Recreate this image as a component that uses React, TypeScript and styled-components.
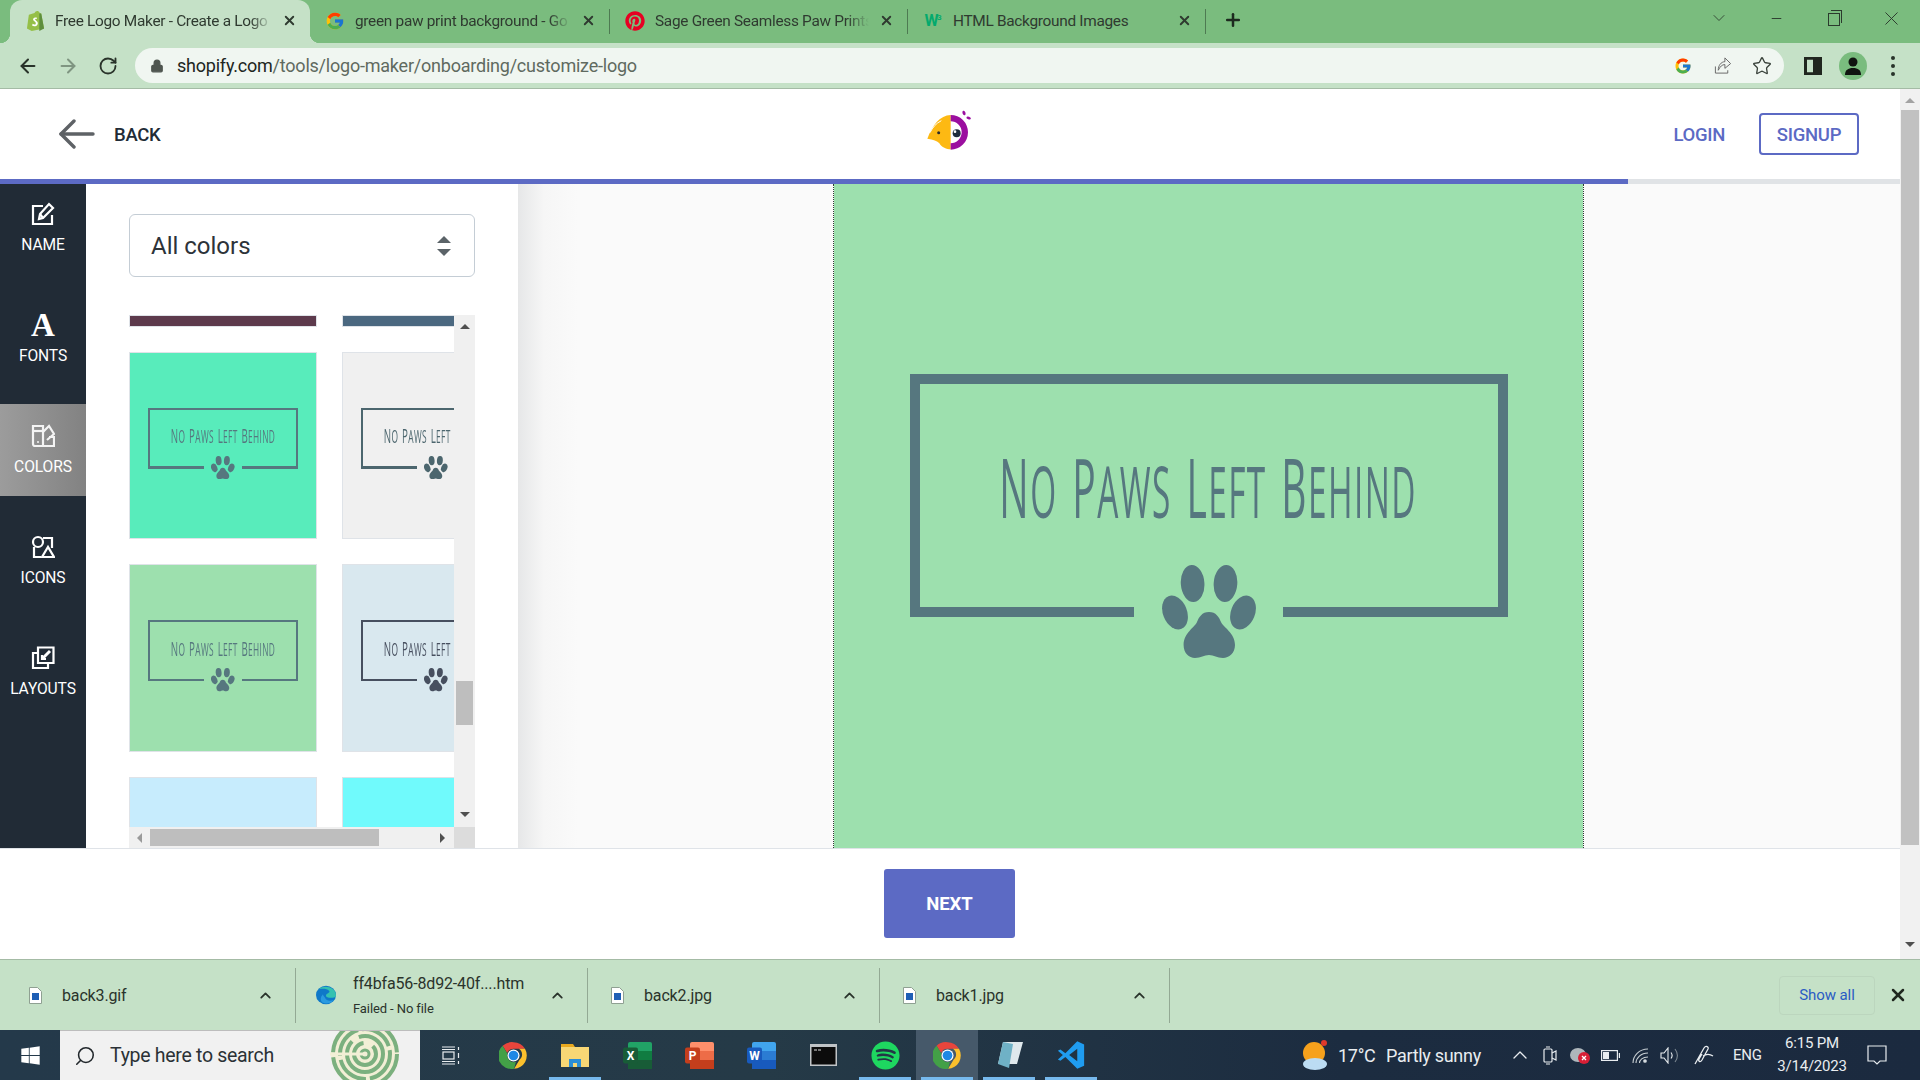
import React from "react";
import styled, { createGlobalStyle } from "styled-components";
import { ArrowLeft, ArrowRight, RotateCw, Lock, Star, X, Plus, ChevronDown, ChevronUp, Minus, Search } from "lucide-react";
import { FcGoogle } from "react-icons/fc";
import { FaPinterest, FaSpotify, FaWindows } from "react-icons/fa";

const Global = createGlobalStyle`
  html, body { margin: 0; padding: 0; background: #fff; overflow: hidden; }
  * { box-sizing: border-box; }
  #root { font-family: Roboto, "Liberation Sans", sans-serif; }
`;
const Screen = styled.div`
  width: 1920px; height: 1080px; display: flex; flex-direction: column; overflow: hidden;
`;

/* Browser chrome */
const TabStrip = styled.div`
  height: 43px; background: #7abc7e; display: flex; align-items: stretch; padding-left: 10px; flex: none;
`;
const Tab = styled.div<{ $w: number; $active?: boolean }>`
  position: relative; width: ${p => p.$w}px; display: flex; align-items: center; padding: 0 13px 2px 15px; gap: 10px; color: #2f3a30;
  background: ${p => (p.$active ? "#c5e1c7" : "transparent")};
  border-radius: 12px 12px 0 0;
  ${p => p.$active && `
    &::before, &::after { content: ""; position: absolute; bottom: 0; width: 10px; height: 10px; }
    &::before { left: -10px; background: radial-gradient(circle at 0 0, #7abc7e 10px, #c5e1c7 10.5px); }
    &::after { right: -10px; background: radial-gradient(circle at 100% 0, #7abc7e 10px, #c5e1c7 10.5px); }
  `}
`;
const TabIcon = styled.span`
  width: 20px; height: 24px; flex: none; display: flex; align-items: center; justify-content: center;
`;
const TabTitle = styled.span`
  flex: 1; font-size: 15.4px; white-space: nowrap; overflow: hidden; letter-spacing: -0.3px;
  mask-image: linear-gradient(to right, #000 90%, transparent 100%);
`;
const PlainTitle = styled(TabTitle)`
  mask-image: none;
`;
const W3Mark = styled.span`
  font: 700 16px Roboto, sans-serif; color: #04aa6d; letter-spacing: -1.5px; white-space: nowrap; line-height: 16px;
  sup { font-size: 8px; line-height: 8px; letter-spacing: 0; }
`;
const TabDivider = styled.div`
  width: 1px; height: 25px; background: #4e7a52; align-self: center; flex: none; margin-bottom: 1px;
`;
const NewTab = styled.div`
  width: 54px; display: flex; align-items: center; justify-content: center; color: #1d2a1f; padding-bottom: 3px;
`;
const WindowControls = styled.div`
  margin-left: auto; display: flex; height: 36px;
`;
const WindowButton = styled.div`
  width: 57.5px; display: flex; align-items: center; justify-content: center; color: #2b3a2d;
`;
const RestoreIcon = styled.span`
  width: 12px; height: 13px; border: 1.4px solid #2b3a2d; position: relative; display: block; margin-top: 2px;
  &::after { content: ""; position: absolute; left: 2px; top: -4px; width: 10px; height: 12px; border: 1.4px solid #2b3a2d; border-left: 0; border-bottom: 0; }
`;
const Toolbar = styled.div`
  height: 46px; background: #c5e1c7; border-bottom: 1px solid #a4bba5; display: flex; align-items: flex-start; padding: 5px 7px 0 8px; flex: none;
`;
const NavButton = styled.div<{ $dim?: boolean }>`
  width: 40px; height: 35px; display: flex; align-items: center; justify-content: center;
  color: ${p => (p.$dim ? "#7f9581" : "#29332a")};
`;
const Omnibox = styled.div`
  flex: 1; height: 35px; background: #f0f6f1; border-radius: 18px; margin: 0 9px 0 7px; display: flex; align-items: center; padding: 0 2px 0 15px;
`;
const Url = styled.span`
  margin-left: 13px; font-size: 18px; letter-spacing: -0.22px; color: #5f6a60; white-space: nowrap;
  b { font-weight: 400; color: #202521; }
`;
const OmniIcons = styled.div`
  margin-left: auto; display: flex;
`;
const OmniButton = styled.div`
  width: 39.5px; height: 35px; display: flex; align-items: center; justify-content: center; color: #3a423b;
`;
const Avatar = styled.span`
  width: 28px; height: 28px; border-radius: 50%; background: #7abc7e; display: flex; align-items: center; justify-content: center;
`;
const Dots = styled.span`
  display: flex; flex-direction: column; gap: 4px;
  i { width: 4px; height: 4px; border-radius: 50%; background: #29332a; display: block; }
`;

/* Page */
const Body = styled.div`
  height: 870px; display: flex; flex: none;
`;
const Page = styled.div`
  flex: 1; display: flex; flex-direction: column; min-width: 0;
`;
const PageScrollbar = styled.div`
  width: 20px; background: #f1f1f1; display: flex; flex-direction: column; align-items: center; padding-top: 9px;
`;
const PageThumb = styled.div`
  width: 18px; height: 735px; background: #c1c1c1; margin-top: 7px; flex: none;
`;
const Arrow = styled.span<{ $dir: "up" | "down" | "left" | "right"; $c?: string }>`
  width: 0; height: 0; display: block; flex: none;
  ${p => {
    const c = p.$c || "#505050";
    if (p.$dir === "up") return `border-left:5px solid transparent;border-right:5px solid transparent;border-bottom:5px solid ${c};`;
    if (p.$dir === "down") return `border-left:5px solid transparent;border-right:5px solid transparent;border-top:5px solid ${c};`;
    if (p.$dir === "left") return `border-top:5px solid transparent;border-bottom:5px solid transparent;border-right:5px solid ${c};`;
    return `border-top:5px solid transparent;border-bottom:5px solid transparent;border-left:5px solid ${c};`;
  }}
`;
const PageArrowDown = styled.div`
  margin-top: 97px;
`;
const Header = styled.header`
  height: 90px; display: grid; grid-template-columns: 1fr auto 1fr; align-items: center; flex: none;
`;
const BackLink = styled.div`
  display: flex; align-items: center; gap: 19px; color: #5e6266; padding-left: 58px;
`;
const BackText = styled.span`
  font-size: 18.5px; font-weight: 500; color: #212b36; letter-spacing: -0.3px; padding-top: 2px;
`;
const HeaderActions = styled.div`
  display: flex; justify-content: flex-end; align-items: center; gap: 34px; padding-right: 41px;
`;
const Login = styled.span`
  font-size: 18.5px; font-weight: 500; color: #5c6ac4; letter-spacing: -0.3px; padding-top: 2px;
`;
const Signup = styled.button`
  width: 100px; height: 42px; border: 2px solid #5c6ac4; border-radius: 4px; background: #fff;
  font: 500 18.5px Roboto, sans-serif; letter-spacing: -0.3px; color: #5c6ac4; padding: 2px 0 0;
`;
const BrandMark = styled.svg`
  margin-bottom: 8px; display: block;
`;
const ProgressTrack = styled.div`
  height: 5px; background: #e0e3e6; flex: none;
`;
const ProgressFill = styled.div`
  width: 1628px; height: 100%; background: #5c6ac4;
`;
const Workspace = styled.div`
  height: 664px; display: flex; flex: none;
`;
const Sidebar = styled.nav`
  width: 86px; background: #212b36; flex: none;
`;
const SideList = styled.div`
  display: flex; flex-direction: column; gap: 19px; margin-top: -2px;
`;
const SideItem = styled.div<{ $active?: boolean }>`
  height: 92px; display: flex; flex-direction: column; align-items: center; padding-top: 20px; color: #fff;
  ${p => p.$active && `background: linear-gradient(90deg, #9c9c9c, #828282);`}
`;
const SideGlyph = styled.div`
  height: 24px; display: flex; align-items: center; justify-content: center;
`;
const FontGlyph = styled.span`
  font: 700 33px "Liberation Serif", serif; line-height: 24px;
`;
const SideLabel = styled.span`
  font-size: 15.6px; margin-top: 10px; line-height: 18px; letter-spacing: -0.1px;
`;
const Panel = styled.aside`
  width: 432px; flex: none; background: #fff; padding: 30px 43px 0; display: flex; flex-direction: column;
`;
const SelectBox = styled.div`
  height: 63px; border: 1.5px solid #c4cdd5; border-radius: 6px; display: flex; align-items: center; justify-content: space-between; padding: 0 23px 0 21px;
  font-size: 24px; color: #2d3339; flex: none; margin-bottom: 38px;
`;
const Stepper = styled.span`
  display: flex; flex-direction: column; gap: 6px;
`;
const StepUp = styled.i`
  width: 0; height: 0; display: block; border-left: 7px solid transparent; border-right: 7px solid transparent; border-bottom: 7px solid #5b6368;
`;
const StepDown = styled.i`
  width: 0; height: 0; display: block; border-left: 7px solid transparent; border-right: 7px solid transparent; border-top: 7px solid #5b6368;
`;
const ScrollFrame = styled.div`
  flex: 1; display: grid; grid-template-columns: 325px 21px; grid-template-rows: 512px 21px;
`;
const Viewport = styled.div`
  overflow: hidden;
`;
const CardGrid = styled.div`
  display: grid; grid-template-columns: 188px 188px; grid-template-rows: 12px 187px 188px 188px; gap: 25px;
`;
const Card = styled.div<{ $bg: string }>`
  background: ${p => p.$bg}; border: 1px solid #dfe3e8; overflow: hidden; display: flex; align-items: center; justify-content: center; padding-bottom: 4px;
`;
const VTrack = styled.div`
  background: #f0f0f0; display: flex; flex-direction: column; align-items: center; padding-top: 9px;
`;
const VThumb = styled.div`
  width: 17px; height: 44px; background: #bebebe; margin-top: 352px; flex: none;
`;
const VDown = styled.div`
  margin-top: 87px;
`;
const HTrack = styled.div`
  background: #f0f0f0; display: flex; align-items: center; padding-left: 8px;
`;
const HThumb = styled.div`
  width: 229px; height: 17px; background: #bebebe; margin-left: 8px; flex: none;
`;
const HRight = styled.div`
  margin-left: 61px;
`;
const Corner = styled.div`
  background: #dcdcdc;
`;
const Canvas = styled.main`
  flex: 1; display: flex; justify-content: center; padding-right: 1px; background: linear-gradient(90deg, #e6e7e8 0, #f6f6f6 26px, #fafafa 60px);
`;
const Preview = styled.div`
  width: 751px; background: #9de0ae; background-clip: padding-box; border-left: 1px dotted #2e3a33; border-right: 1px dotted #2e3a33; display: flex; align-items: center; justify-content: center;
`;
const Footer = styled.footer`
  height: 111px; border-top: 1px solid #dfe3e8; display: flex; justify-content: center; padding: 20px 1px 0 0; flex: none; background: #fff;
`;
const NextButton = styled.button`
  width: 131px; height: 69px; background: #5c6ac4; color: #fff; border: 0; border-radius: 3px; font: 700 18.5px Roboto, sans-serif; padding: 0;
`;

/* Logo artwork */
const LogoRoot = styled.div<{ $s: number; $c: string }>`
  width: ${p => 598 * p.$s}px; padding-bottom: ${p => 42 * p.$s}px; color: ${p => p.$c}; flex: none; display: flex; flex-direction: column;
`;
const LogoFrame = styled.div<{ $s: number }>`
  height: ${p => 233 * p.$s}px; border: ${p => Math.max(10 * p.$s, 1.6)}px solid currentColor; border-bottom: 0;
  display: flex; align-items: flex-start; justify-content: center; padding-top: ${p => 62 * p.$s}px; overflow: hidden;
`;
const LogoText = styled.span<{ $s: number }>`
  font-family: "Open Sans", Lato, sans-serif; font-weight: 500; text-transform: uppercase; white-space: nowrap;
  font-size: ${p => 71 * p.$s}px; line-height: ${p => 80 * p.$s}px; letter-spacing: ${p => 3 * p.$s}px; word-spacing: ${p => 10 * p.$s}px;
  transform: scaleX(0.47); flex: none;
`;
const LogoWord = styled.span<{ $s: number }>`
  display: inline-block;
  &::first-letter { font-size: ${p => 83 * p.$s}px; }
`;
const LogoBase = styled.div<{ $s: number }>`
  height: ${p => Math.max(10 * p.$s, 2)}px; display: flex; align-items: center;
`;
const LogoLine = styled.div`
  flex: 1; height: 100%; background: currentColor;
`;
const PawSlot = styled.div<{ $s: number }>`
  width: ${p => 149 * p.$s}px; display: flex; justify-content: center; align-items: center; height: 100%;
  svg { width: ${p => 94 * p.$s}px; height: ${p => 93 * p.$s}px; flex: none; }
`;

/* Download shelf */
const Shelf = styled.div`
  height: 71px; background: #c5e1c7; border-top: 1px solid #a4bba5; display: flex; align-items: center; flex: none; color: #2a332b;
`;
const DownloadItem = styled.div<{ $w: number; $pad: number; $gap: number }>`
  width: ${p => p.$w}px; height: 55px; border-right: 1px solid #93a994; display: flex; align-items: center; flex: none;
  padding: 0 21px 0 ${p => p.$pad}px; gap: ${p => p.$gap}px;
`;
const FileName = styled.span`
  font-size: 16px; letter-spacing: -0.15px;
`;
const FileStack = styled.div`
  display: flex; flex-direction: column; gap: 8px;
`;
const FileStatus = styled.span`
  font-size: 13px; letter-spacing: -0.1px;
`;
const Caret = styled.span`
  margin-left: auto; display: flex;
`;
const ShowAll = styled.div`
  margin-left: auto; width: 96px; height: 39px; border: 1px solid #bcd6be; border-radius: 4px; display: flex; align-items: center; justify-content: center;
  color: #2a5cc4; font-size: 15px; letter-spacing: -0.1px;
`;
const ShelfClose = styled.div`
  width: 45px; display: flex; justify-content: center; color: #20281f;
`;

/* Taskbar */
const Taskbar = styled.div`
  height: 50px; background: linear-gradient(90deg, #24394a 0, #253a47 40%, #1c2c40 70%, #1b2a3f 100%); display: flex; align-items: stretch; flex: none; color: #eef2f4;
`;
const StartButton = styled.div`
  width: 60px; display: flex; align-items: center; justify-content: center; color: #fff;
`;
const SearchBox = styled.div`
  width: 360px; background: #f1f1f1; border-top: 1px solid #bdbdbd; display: flex; align-items: center; padding: 0 20px 0 14px; gap: 14px; color: #22282c; overflow: hidden;
`;
const SearchText = styled.span`
  font-size: 19.5px; letter-spacing: -0.3px; white-space: nowrap; color: #2b3136;
`;
const Maze = styled.svg`
  margin-left: auto; flex: none;
`;
const TaskIcons = styled.div`
  display: flex;
`;
const TaskSlot = styled.div<{ $on?: boolean; $run?: boolean }>`
  width: 62px; position: relative; display: flex; align-items: center; justify-content: center;
  background: ${p => (p.$on ? "#46596a" : "transparent")};
  ${p => p.$run && `&::after { content: ""; position: absolute; left: 5px; right: 5px; bottom: 0; height: 3px; background: #76b9ed; }`}
`;
const Tray = styled.div`
  margin-left: auto; display: flex; align-items: center; padding-right: 18px; font-size: 18px; color: #e9edf0;
`;
const TraySlot = styled.div<{ $w: number }>`
  width: ${p => p.$w}px; display: flex; align-items: center; justify-content: center; flex: none;
`;
const TrayText = styled.span<{ $w: number; $pad?: number }>`
  width: ${p => p.$w}px; padding-left: ${p => p.$pad || 0}px; flex: none; white-space: nowrap; letter-spacing: -0.3px;
`;
const TrayEng = styled(TrayText)`
  font-size: 15px;
`;
const Clock = styled.div`
  width: 80px; flex: none; display: flex; flex-direction: column; align-items: center; gap: 4px; font-size: 15px; line-height: 19px; letter-spacing: -0.2px;
`;

const Paw = () => (
  <svg viewBox="0 0 94 93" fill="currentColor">
    <ellipse cx="30.6" cy="18.5" rx="11.8" ry="18.5" transform="rotate(-4 30.6 18.5)" />
    <ellipse cx="63.5" cy="18.5" rx="11.8" ry="18.5" transform="rotate(4 63.5 18.5)" />
    <ellipse cx="13" cy="47.5" rx="12" ry="17.5" transform="rotate(-22 13 47.5)" />
    <ellipse cx="81" cy="47.5" rx="12" ry="17.5" transform="rotate(22 81 47.5)" />
    <path d="M47 47C54 47 57 52 59 57C61 62 73 68 73 80C73 88 67 93 61 93C55 93 52 90 47 90C42 90 39 93 33 93C27 93 21.6 88 21.6 80C21.6 68 33 62 35 57C37 52 40 47 47 47Z" />
  </svg>
);

const Logo = ({ s, color }: { s: number; color: string }) => (
  <LogoRoot $s={s} $c={color}>
    <LogoFrame $s={s}>
      <LogoText $s={s}>
        <LogoWord $s={s}>No</LogoWord>{" "}
        <LogoWord $s={s}>Paws</LogoWord>{" "}
        <LogoWord $s={s}>Left</LogoWord>{" "}
        <LogoWord $s={s}>Behind</LogoWord>
      </LogoText>
    </LogoFrame>
    <LogoBase $s={s}>
      <LogoLine />
      <PawSlot $s={s}><Paw /></PawSlot>
      <LogoLine />
    </LogoBase>
  </LogoRoot>
);

const ChromeIcon = ({ size = 29 }: { size?: number }) => (
  <svg width={size} height={size} viewBox="0 0 48 48">
    <path d="M24 2a22 22 0 0 1 19 11H24a11 11 0 0 0-10.500 7L6 8A22 22 0 0 1 24 2Z" fill="#e8453c" />
    <path d="M43 13a22 22 0 0 1-18 33l9-15a11 11 0 0 0-1-18Z" fill="#fbc02d" />
    <path d="M25 46A22 22 0 0 1 6 8l8 13a11 11 0 0 0 14 13.500Z" fill="#43a047" />
    <circle cx="24" cy="24" r="10" fill="#fff" />
    <circle cx="24" cy="24" r="8" fill="#1e88e5" />
  </svg>
);
const Shopify = () => (
  <svg width="19" height="21" viewBox="0 0 20 24" preserveAspectRatio="none">
    <path d="M3 5.500 9 3.500C10 1 13 0 14.500 3.500L16 4l3 17-13 3L1 21Z" fill="#95bf47" />
    <path d="M16 4l3 17-5 3 0-20Z" fill="#5e8e3e" />
    <path d="M11.500 8.800c-3-1-4.800 1-3.800 3 .8 1.500 3 2 2.600 3.800-.3 1.300-2 1.200-3.300.2l-.6 2c1.800 1.200 5.400 1 6-2.200.5-3-3-3.500-2.800-5 .1-.9 1.200-.8 2-.4Z" fill="#fff" />
  </svg>
);
const FileIcon = () => (
  <svg width="13" height="17" viewBox="0 0 13 17">
    <path d="M.5.5h8l4 4v12h-12Z" fill="#fff" stroke="#8fa092" />
    <rect x="3" y="6" width="7" height="7" fill="#1f5fb5" />
  </svg>
);
const EdgeIcon = () => (
  <svg width="20" height="20" viewBox="0 0 20 28" preserveAspectRatio="none">
    <ellipse cx="10" cy="14" rx="10" ry="13" fill="#0f78c8" />
    <path d="M3 6C8-1 20 3 20 15c0 2-2 3-5 3-3 0-5-1-5-3 0-4 5-4 3-7-2-3-7-3-10-2Z" fill="#35c1b0" />
    <path d="M9 18c1 4 5 5 9 3-3 5-8 6-11 4-3-2-3-8 0-12 0 2 1 3 2 5Z" fill="#2a9ae0" />
  </svg>
);
const OfficeIcon = ({ a, b, c, letter }: { a: string; b: string; c: string; letter: string }) => (
  <svg width="29" height="27" viewBox="0 0 29 27">
    <rect x="5" y="0" width="24" height="27" rx="2" fill={a} />
    <rect x="5" y="9" width="24" height="9" fill={b} />
    <rect x="5" y="18" width="24" height="9" fill={c} />
    <rect x="0" y="5.500" width="15" height="16" rx="2" fill={c} />
    <text x="7.500" y="18" textAnchor="middle" fontFamily="Roboto, sans-serif" fontWeight="700" fontSize="12" fill="#fff">{letter}</text>
  </svg>
);
const SideIconName = () => (
  <svg width="24" height="24" viewBox="0 0 24 24" fill="none" stroke="#fff" strokeWidth="2.200">
    <path d="M21 13v9H2V4h10" />
    <path d="M8 17l1-5L18 2l4 4-10 10Z" />
    <path d="M9 12l3 4" />
  </svg>
);
const SideIconColors = () => (
  <svg width="24" height="24" viewBox="0 0 24 24" fill="none" stroke="#f4f4f4" strokeWidth="2.200">
    <path d="M2 2h10v20H4a2 2 0 0 1-2-2Z" />
    <path d="M2 7h10" />
    <path d="M12 8l6-6 5 8-7 6" />
    <path d="M12 22h11v-9h-5" />
    <circle cx="7" cy="18" r="1" fill="#f4f4f4" stroke="none" />
  </svg>
);
const SideIconShapes = () => (
  <svg width="24" height="24" viewBox="0 0 24 24" fill="none" stroke="#fff" strokeWidth="2.200">
    <circle cx="7" cy="7" r="5" />
    <path d="M12 3h9v10" />
    <path d="M3 12v10h7" />
    <path d="M11 22l6-10 6 10Z" />
  </svg>
);
const SideIconLayouts = () => (
  <svg width="24" height="24" viewBox="0 0 24 24" fill="none" stroke="#fff" strokeWidth="2.200">
    <path d="M7 7H2v15h15v-5" />
    <path d="M7 1.500h15.500V17H7Z" />
    <path d="M11 13l8-8" strokeWidth="3" />
    <path d="M11 9v4h4" />
  </svg>
);
const BirdLogo = () => (
  <BrandMark width="100" height="80" viewBox="0 0 300 240">
    <path d="M152 75C120 76 98 105 82 146C100 149 112 152 118 160C125 172 140 178 152 178Z" fill="#fdb913" />
    <path d="M90 128C98 112 108 100 124 92" stroke="#fff" strokeWidth="3" fill="none" />
    <circle cx="116" cy="128" r="4.500" fill="#2b2b2b" />
    <path d="M152 75A52 52 0 0 1 152 179L152 160A33 33 0 0 0 152 94Z" fill="#9b0f9f" />
    <circle cx="170" cy="130" r="12" fill="#1f2d3d" />
    <circle cx="165" cy="125" r="4" fill="#fff" />
    <ellipse cx="192" cy="69" rx="4.500" ry="7" transform="rotate(-20 192 69)" fill="#9b0f9f" />
    <ellipse cx="206" cy="84" rx="7" ry="4" transform="rotate(20 206 84)" fill="#9b0f9f" />
  </BrandMark>
);

const cards: { bg: string; logo?: string }[] = [
  { bg: "#5d3a4c" }, { bg: "#4b6880" },
  { bg: "#58ecbb", logo: "#56777f" }, { bg: "#f0f0f0", logo: "#4c666e" },
  { bg: "#9de0ae", logo: "#56777f" }, { bg: "#d9e8ef", logo: "#474f5f" },
  { bg: "#c7ecfd" }, { bg: "#70fafc" },
];

export default function App() {
  return (
    <Screen>
      <Global />
      <TabStrip>
        <Tab $w={300} $active>
          <TabIcon><Shopify /></TabIcon>
          <TabTitle>Free Logo Maker - Create a Logo</TabTitle>
          <X size={15} strokeWidth={3} />
        </Tab>
        <Tab $w={299}>
          <TabIcon><FcGoogle size={20} /></TabIcon>
          <TabTitle>green paw print background - Go</TabTitle>
          <X size={15} strokeWidth={3} />
        </Tab>
        <TabDivider />
        <Tab $w={297}>
          <TabIcon><FaPinterest size={20} color="#e60023" /></TabIcon>
          <TabTitle>Sage Green Seamless Paw Prints</TabTitle>
          <X size={15} strokeWidth={3} />
        </Tab>
        <TabDivider />
        <Tab $w={297}>
          <TabIcon><W3Mark>W<sup>3</sup></W3Mark></TabIcon>
          <PlainTitle>HTML Background Images</PlainTitle>
          <X size={15} strokeWidth={3} />
        </Tab>
        <TabDivider />
        <NewTab><Plus size={20} strokeWidth={3} /></NewTab>
        <WindowControls>
          <WindowButton><ChevronDown size={20} strokeWidth={1} /></WindowButton>
          <WindowButton><Minus size={15} strokeWidth={1.500} /></WindowButton>
          <WindowButton><RestoreIcon /></WindowButton>
          <WindowButton><X size={23} strokeWidth={1} /></WindowButton>
        </WindowControls>
      </TabStrip>
      <Toolbar>
        <NavButton><ArrowLeft size={22} strokeWidth={2.200} /></NavButton>
        <NavButton $dim><ArrowRight size={22} strokeWidth={2.200} /></NavButton>
        <NavButton><RotateCw size={20} strokeWidth={2.200} /></NavButton>
        <Omnibox>
          <Lock size={14} fill="#4f5650" color="#4f5650" strokeWidth={2} />
          <Url><b>shopify.com</b>/tools/logo-maker/onboarding/customize-logo</Url>
          <OmniIcons>
            <OmniButton><FcGoogle size={18} /></OmniButton>
            <OmniButton>
              <svg width="20" height="19" viewBox="0 0 20 20" fill="none" stroke="#666" strokeWidth="1">
                <path d="M2 11v7h13v-3" />
                <path d="M5 15c0-5 3-9 7-9V2l6 6-6 5V9c-3 0-5 2-7 6Z" />
              </svg>
            </OmniButton>
            <OmniButton><Star size={20} strokeWidth={1.600} /></OmniButton>
          </OmniIcons>
        </Omnibox>
        <NavButton>
          <svg width="18" height="18" viewBox="0 0 18 20" preserveAspectRatio="none"><path d="M0 0h18v20H0Zm3 3v14h6V3Z" fill="#20261f" fillRule="evenodd" /></svg>
        </NavButton>
        <NavButton>
          <Avatar>
            <svg width="16" height="18" viewBox="0 0 16 18" fill="#101510"><circle cx="8" cy="5" r="4.500" /><path d="M0 18c0-5 3-7 8-7s8 2 8 7Z" /></svg>
          </Avatar>
        </NavButton>
        <NavButton><Dots><i /><i /><i /></Dots></NavButton>
      </Toolbar>
      <Body>
        <Page>
          <Header>
            <BackLink>
              <svg width="37" height="30" viewBox="0 0 37 30" fill="none" stroke="#5e6266" strokeWidth="3.400" strokeLinecap="round" strokeLinejoin="round">
                <path d="M35 15H3" />
                <path d="M16 2L3 15l13 13" />
              </svg>
              <BackText>BACK</BackText>
            </BackLink>
            <BirdLogo />
            <HeaderActions>
              <Login>LOGIN</Login>
              <Signup>SIGNUP</Signup>
            </HeaderActions>
          </Header>
          <ProgressTrack><ProgressFill /></ProgressTrack>
          <Workspace>
            <Sidebar>
              <SideList>
                <SideItem><SideGlyph><SideIconName /></SideGlyph><SideLabel>NAME</SideLabel></SideItem>
                <SideItem><SideGlyph><FontGlyph>A</FontGlyph></SideGlyph><SideLabel>FONTS</SideLabel></SideItem>
                <SideItem $active><SideGlyph><SideIconColors /></SideGlyph><SideLabel>COLORS</SideLabel></SideItem>
                <SideItem><SideGlyph><SideIconShapes /></SideGlyph><SideLabel>ICONS</SideLabel></SideItem>
                <SideItem><SideGlyph><SideIconLayouts /></SideGlyph><SideLabel>LAYOUTS</SideLabel></SideItem>
              </SideList>
            </Sidebar>
            <Panel>
              <SelectBox>
                All colors
                <Stepper><StepUp /><StepDown /></Stepper>
              </SelectBox>
              <ScrollFrame>
                <Viewport>
                  <CardGrid>
                    {cards.map((c, i) => (
                      <Card key={i} $bg={c.bg}>
                        {c.logo && <Logo s={0.25} color={c.logo} />}
                      </Card>
                    ))}
                  </CardGrid>
                </Viewport>
                <VTrack>
                  <Arrow $dir="up" />
                  <VThumb />
                  <VDown><Arrow $dir="down" /></VDown>
                </VTrack>
                <HTrack>
                  <Arrow $dir="left" $c="#9a9a9a" />
                  <HThumb />
                  <HRight><Arrow $dir="right" /></HRight>
                </HTrack>
                <Corner />
              </ScrollFrame>
            </Panel>
            <Canvas>
              <Preview>
                <Logo s={1} color="#56777f" />
              </Preview>
            </Canvas>
          </Workspace>
          <Footer><NextButton>NEXT</NextButton></Footer>
        </Page>
        <PageScrollbar>
          <Arrow $dir="up" $c="#a3a3a3" />
          <PageThumb />
          <PageArrowDown><Arrow $dir="down" /></PageArrowDown>
        </PageScrollbar>
      </Body>
      <Shelf>
        <DownloadItem $w={296} $pad={29} $gap={20}>
          <FileIcon /><FileName>back3.gif</FileName>
          <Caret><ChevronUp size={17} strokeWidth={2.500} /></Caret>
        </DownloadItem>
        <DownloadItem $w={292} $pad={20} $gap={17}>
          <EdgeIcon />
          <FileStack>
            <FileName>ff4bfa56-8d92-40f....htm</FileName>
            <FileStatus>Failed - No file</FileStatus>
          </FileStack>
          <Caret><ChevronUp size={17} strokeWidth={2.500} /></Caret>
        </DownloadItem>
        <DownloadItem $w={292} $pad={23} $gap={20}>
          <FileIcon /><FileName>back2.jpg</FileName>
          <Caret><ChevronUp size={17} strokeWidth={2.500} /></Caret>
        </DownloadItem>
        <DownloadItem $w={290} $pad={23} $gap={20}>
          <FileIcon /><FileName>back1.jpg</FileName>
          <Caret><ChevronUp size={17} strokeWidth={2.500} /></Caret>
        </DownloadItem>
        <ShowAll>Show all</ShowAll>
        <ShelfClose><X size={20} strokeWidth={3} /></ShelfClose>
      </Shelf>
      <Taskbar>
        <StartButton><FaWindows size={21} /></StartButton>
        <SearchBox>
          <Search size={22} strokeWidth={1.700} transform="scale(-1,1)" />
          <SearchText>Type here to search</SearchText>
          <Maze width="70" height="50" viewBox="0 0 70 50" fill="none">
            <circle cx="35" cy="23" r="34" fill="#f2efd6" />
            <circle cx="35" cy="23" r="32" stroke="#7bb07f" strokeWidth="4" strokeDasharray="46 5" />
            <circle cx="35" cy="23" r="25" stroke="#7bb07f" strokeWidth="4" strokeDasharray="34 4" />
            <circle cx="35" cy="23" r="18" stroke="#7bb07f" strokeWidth="4" strokeDasharray="70 8" />
            <circle cx="35" cy="23" r="11" stroke="#7bb07f" strokeWidth="4" strokeDasharray="50 10" />
            <circle cx="35" cy="23" r="4" stroke="#7bb07f" strokeWidth="3" />
            <path d="M0 23h34" stroke="#f2efd6" strokeWidth="3" />
          </Maze>
        </SearchBox>
        <TaskIcons>
          <TaskSlot>
            <svg width="18" height="19" viewBox="0 0 18 19" fill="none" stroke="#e8ecef" strokeWidth="1.200">
              <path d="M0 1h13M0 3.500h13M0 15.500h13M0 18h13" />
              <rect x="1" y="6" width="11" height="7" />
              <path d="M16.500 1v3M16.500 7v5M16.500 15v3" />
            </svg>
          </TaskSlot>
          <TaskSlot><ChromeIcon /></TaskSlot>
          <TaskSlot $run>
            <svg width="28" height="23" viewBox="0 0 28 23">
              <path d="M0 0h12l2 3H0Z" fill="#e9a91f" />
              <rect x="0" y="3" width="28" height="20" fill="#f8d775" />
              <path d="M8 23v-8h12v8h-4v-4h-4v4Z" fill="#2c8ed6" />
            </svg>
          </TaskSlot>
          <TaskSlot><OfficeIcon a="#21a366" b="#107c41" c="#185c37" letter="X" /></TaskSlot>
          <TaskSlot><OfficeIcon a="#ff8f6b" b="#ed6c47" c="#c43e1c" letter="P" /></TaskSlot>
          <TaskSlot><OfficeIcon a="#41a5ee" b="#2b7cd3" c="#185abd" letter="W" /></TaskSlot>
          <TaskSlot>
            <svg width="27" height="22" viewBox="0 0 27 22">
              <rect x="0" y="0" width="27" height="22" fill="#c0c4c7" />
              <rect x="1.500" y="3" width="24" height="17.500" fill="#0c0c0c" />
              <path d="M4 6h3M8 6h3" stroke="#ddd" />
            </svg>
          </TaskSlot>
          <TaskSlot $run><FaSpotify size={29} color="#1ed760" /></TaskSlot>
          <TaskSlot $on $run><ChromeIcon /></TaskSlot>
          <TaskSlot $run>
            <svg width="28" height="26" viewBox="0 0 28 26">
              <path d="M8 0h20l-6 22H3Z" fill="#dfe8ec" />
              <path d="M8 0L3 22l11 4 4-24Z" fill="#6fb1c6" />
            </svg>
          </TaskSlot>
          <TaskSlot $run>
            <svg width="30" height="30" viewBox="0 0 24 24">
              <path fillRule="evenodd" d="M17 1L7.500 10.500 3.500 7.500 1.500 8.500 5.500 12 1.500 15.500 3.500 16.500 7.500 13.500 17 23 22.500 20.500V3.500ZM17 7V17L10.500 12Z" fill="#1f9cf0" />
            </svg>
          </TaskSlot>
        </TaskIcons>
        <Tray>
          <TraySlot $w={40}>
            <svg width="28" height="30" viewBox="0 0 28 30">
              <circle cx="14" cy="13" r="11" fill="#f6a11c" />
              <circle cx="24" cy="3" r="3" fill="#e0392b" />
              <ellipse cx="15" cy="24" rx="12" ry="6" fill="#bcdcf3" />
            </svg>
          </TraySlot>
          <TrayText $w={52} $pad={4}>17°C</TrayText>
          <TrayText $w={119}>Partly sunny</TrayText>
          <TraySlot $w={30}><ChevronUp size={24} strokeWidth={1.300} /></TraySlot>
          <TraySlot $w={30}>
            <svg width="15" height="19" viewBox="0 0 15 19" fill="none" stroke="#e9edf0" strokeWidth="1.200"><rect x="1" y="3" width="8" height="13" rx="1" /><path d="M3 1h4M3 18h4M9 7l4-2v9l-4-2" /></svg>
          </TraySlot>
          <TraySlot $w={30}>
            <svg width="20" height="17" viewBox="0 0 20 17"><ellipse cx="8" cy="8" rx="8" ry="7" fill="#aeb6bb" /><circle cx="14" cy="11" r="6" fill="#d81f36" /><path d="M12 9l4 4M16 9l-4 4" stroke="#fff" strokeWidth="1.300" /></svg>
          </TraySlot>
          <TraySlot $w={30}>
            <svg width="19" height="11" viewBox="0 0 19 11" fill="none" stroke="#e9edf0" strokeWidth="1.200"><rect x=".6" y=".6" width="15.800" height="9.800" /><rect x="2" y="2" width="6" height="7" fill="#e9edf0" stroke="none" /><path d="M18.400 3v5" /></svg>
          </TraySlot>
          <TraySlot $w={30}>
            <svg width="17" height="15" viewBox="0 0 17 15" fill="none" stroke="#c9d0d4" strokeWidth="1.100"><path d="M1 15C1 8 7 1 16 1M4 15c0-5 5-10 12-10M7.500 15c0-3 3-6 8.500-6" /><circle cx="13" cy="13" r="1.300" fill="#e9edf0" /></svg>
          </TraySlot>
          <TraySlot $w={30}>
            <svg width="20" height="17" viewBox="0 0 20 17" fill="none" stroke="#e9edf0" strokeWidth="1.100"><path d="M1 6h3l4-5v15l-4-5H1Z" /><path d="M11 5.500c1.500 2 1.500 4 0 6" /><path d="M15 2c3 4 3 9 0 13" stroke="#7c8791" /></svg>
          </TraySlot>
          <TraySlot $w={38}>
            <svg width="20" height="20" viewBox="0 0 20 20" fill="none" stroke="#e9edf0" strokeWidth="1.300"><path d="M1 19L10 3c2-3 5-1 4 1L8 15c-2 3-4 1-3-1l3-5M9 11c3-2 7-2 10 0" /></svg>
          </TraySlot>
          <TrayEng $w={49} $pad={10}>ENG</TrayEng>
          <Clock><span>6:15 PM</span><span>3/14/2023</span></Clock>
          <TraySlot $w={50}>
            <svg width="20" height="20" viewBox="0 0 20 20" fill="none" stroke="#e9edf0" strokeWidth="1.200"><path d="M1 1h18v15h-6l-3 3-3-3H1Z" /></svg>
          </TraySlot>
        </Tray>
      </Taskbar>
    </Screen>
  );
}
